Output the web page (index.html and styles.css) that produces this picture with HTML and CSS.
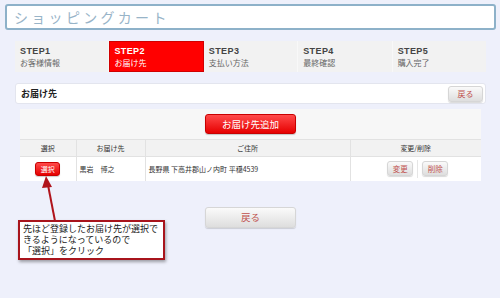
FILE: index.html
```
<!DOCTYPE html>
<html lang="ja">
<head>
    <meta charset="UTF-8">
    <title>ショッピングカート</title>
    <link rel="stylesheet" href="styles.css">
</head>
<body>
    <div class="page">
        <div class="title-box">ショッピングカート</div>

        <div class="main">
            <ul class="steps">
                <li><b>STEP1</b><span>お客様情報</span></li>
                <li class="current"><b>STEP2</b><span>お届け先</span></li>
                <li><b>STEP3</b><span>支払い方法</span></li>
                <li><b>STEP4</b><span>最終確認</span></li>
                <li><b>STEP5</b><span>購入完了</span></li>
            </ul>

            <div class="section-bar">
                <h2>お届け先</h2>
                <button class="btn-gray btn-back-small">戻る</button>
            </div>

            <div class="address-box">
                <div class="add-row">
                    <button class="btn-red btn-add">お届け先追加</button>
                </div>
                <table class="address-table">
                    <tr>
                        <th class="col-select">選択</th>
                        <th class="col-name">お届け先</th>
                        <th class="col-addr">ご住所</th>
                        <th>変更/削除</th>
                    </tr>
                    <tr>
                        <td class="center"><button class="btn-red btn-select">選択</button></td>
                        <td>黒岩　博之</td>
                        <td>長野県 下高井郡山ノ内町 平穏4539</td>
                        <td class="center">
                            <div class="edit-btns">
                                <button class="btn-gray btn-small">変更</button>
                                <span class="sep"></span>
                                <button class="btn-gray btn-small">削除</button>
                            </div>
                        </td>
                    </tr>
                </table>
            </div>

            <div class="back-row">
                <button class="btn-gray btn-back">戻る</button>
            </div>
        </div>

        <!-- annotation -->
        <svg class="arrow" width="30" height="46" viewBox="0 0 30 46">
            <line x1="22" y1="46" x2="15" y2="10" stroke="#b0141c" stroke-width="2"/>
            <polygon points="13,1 9,13 19,12" fill="#b0141c"/>
        </svg>
        <div class="callout">先ほど登録したお届け先が選択で<br>きるようになっているので<br>「選択」をクリック</div>
    </div>
</body>
</html>
```

FILE: styles.css
```
* {
    margin: 0;
    padding: 0;
    box-sizing: border-box;
}

body {
    background: #eef0fb;
    font-family: "Noto Sans CJK JP", "Liberation Sans", sans-serif;
    color: #333;
    width: 500px;
    height: 298px;
    overflow: hidden;
}

.page {
    position: relative;
    padding: 4px 4px 0 5px;
}

.title-box {
    height: 26px;
    background: #fff;
    border: 2px solid #8db1c9;
    border-radius: 3px;
    color: #98b4c8;
    font-size: 14px;
    letter-spacing: 3.3px;
    line-height: 22px;
    padding-left: 7px;
}

.main {
    margin: 11px 10px 0 10px;
}

.steps {
    list-style: none;
    display: flex;
    height: 31px;
    background: #f2f2f2;
}

.steps li {
    flex: 1;
    display: flex;
    flex-direction: column;
    padding: 5px 0 0 5px;
    border-right: 1px solid #f8f8f8;
}

.steps li:last-child {
    border-right: none;
}

.steps b {
    font-family: "Liberation Sans", sans-serif;
    font-size: 9px;
    color: #444;
    letter-spacing: 0.4px;
    line-height: 11px;
}

.steps span {
    font-size: 8px;
    color: #666;
    line-height: 11px;
}

.steps li.current {
    background: #ff0000;
    border: 1px solid #d00000;
    padding: 4px 0 0 4px;
}

.steps li.current b,
.steps li.current span {
    color: #fff;
}

.section-bar {
    margin-top: 11px;
    height: 21px;
    background: #fff;
    border: 1px solid #e3e5ee;
    border-radius: 3px;
    display: flex;
    align-items: center;
    justify-content: space-between;
    padding: 0 2px 0 5px;
}

.section-bar h2 {
    font-size: 9px;
    font-weight: bold;
    color: #222;
}

.btn-gray {
    background: linear-gradient(#fafafa, #dedede);
    border: 1px solid #d6d6d6;
    border-radius: 3px;
    color: #c0504d;
    font-family: inherit;
    box-shadow: 0 1px 1px rgba(0, 0, 0, 0.15);
}

.btn-red {
    background: linear-gradient(#ff4a4a, #e60000);
    border: 1px solid #c80000;
    border-radius: 3px;
    color: #fff;
    font-family: inherit;
    box-shadow: 0 1px 1px rgba(0, 0, 0, 0.2);
}

.btn-back-small {
    width: 35px;
    height: 16px;
    font-size: 8px;
}

.address-box {
    margin: 5px 5px 0 5px;
    background: #f7f7f7;
}

.add-row {
    height: 30px;
    display: flex;
    justify-content: center;
    padding-top: 5px;
}

.btn-add {
    width: 91px;
    height: 20px;
    font-size: 9.5px;
}

.address-table {
    width: 100%;
    border-collapse: collapse;
    font-size: 7px;
}

.address-table th {
    height: 17px;
    font-weight: normal;
    background: #f2f2f2;
    border: 1px solid #e2e2e2;
    color: #333;
}

.address-table td {
    height: 24px;
    background: #fff;
    border: 1px solid #e2e2e2;
    padding-left: 3px;
    color: #333;
}

.address-table tr > :first-child {
    border-left: none;
}

.address-table tr > :last-child {
    border-right: none;
}

.address-table tr:last-child td {
    border-bottom: none;
}

.col-select {
    width: 56px;
}

.col-name {
    width: 69px;
}

.col-addr {
    width: 205px;
}

.address-table td.center {
    text-align: center;
    padding-left: 0;
}

.btn-select {
    width: 25px;
    height: 14px;
    font-size: 7px;
}

.edit-btns {
    display: flex;
    justify-content: center;
    align-items: center;
    gap: 4px;
    padding-left: 4px;
}

.btn-small {
    width: 26px;
    height: 15px;
    font-size: 7.5px;
}

.sep {
    width: 1px;
    height: 18px;
    background: #e6e6e6;
}

.back-row {
    display: flex;
    justify-content: center;
    margin-top: 26px;
}

.btn-back {
    width: 91px;
    height: 21px;
    font-size: 9.5px;
}

.arrow {
    position: absolute;
    left: 33px;
    top: 175px;
}

.callout {
    position: absolute;
    left: 18px;
    top: 220px;
    width: 147px;
    height: 40px;
    background: #fff;
    border: 2px solid #a8141c;
    box-shadow: 1px 2px 3px rgba(0, 0, 0, 0.35);
    font-size: 9px;
    line-height: 11px;
    color: #222;
    padding: 1px 2px 0 3px;
    white-space: nowrap;
}
```
